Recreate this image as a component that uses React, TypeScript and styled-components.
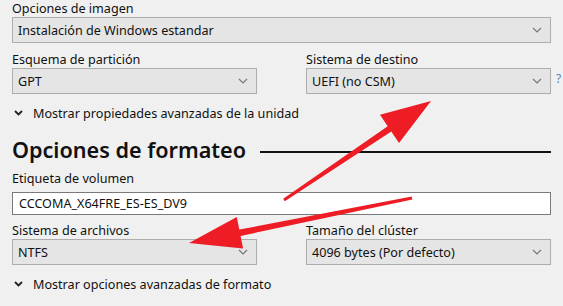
import React from 'react';
import styled, { createGlobalStyle } from 'styled-components';

const GlobalStyle = createGlobalStyle`
  html, body {
    margin: 0;
    padding: 0;
    background: #f0f0f0;
  }
  body {
    font-family: "Noto Sans", "Open Sans", sans-serif;
    color: #111;
  }
`;

const Page = styled.div`
  position: relative;
  width: 563px;
  height: 306px;
  overflow: hidden;
  box-sizing: border-box;
  padding: 0 12px;
  background: #f0f0f0;
`;

const Label = styled.div<{ $gap?: number }>`
  font-size: 12.6px;
  line-height: 17px;
  height: 17px;
  margin-top: ${p => p.$gap ?? 0}px;
  white-space: nowrap;
`;

const Select = styled.div`
  box-sizing: border-box;
  height: 26px;
  display: flex;
  align-items: center;
  justify-content: space-between;
  padding: 0 8px 0 5px;
  background: #e5e5e5;
  border: 1px solid #adadad;
  font-size: 12.6px;
  white-space: nowrap;
`;

const Row = styled.div`
  display: grid;
  grid-template-columns: 245px 245px;
  column-gap: 49px;
`;

const Field = styled.div`
  position: relative;
`;

const Help = styled.span`
  position: absolute;
  left: calc(100% + 5px);
  font-size: 12px;
  line-height: 14px;
  color: #5b86b3;
`;

const Toggle = styled.div<{ $h: number }>`
  display: flex;
  align-items: center;
  gap: 10px;
  height: ${p => p.$h}px;
  padding-left: 2px;
  font-size: 12.6px;
  white-space: nowrap;
`;

const Heading = styled.div`
  display: flex;
  align-items: center;
  gap: 14px;
  height: 36px;
`;

const HeadingText = styled.h2`
  margin: 0;
  font-size: 21.6px;
  font-weight: 600;
  line-height: 26px;
  white-space: nowrap;
`;

const Rule = styled.div`
  flex: 1;
  height: 2px;
  background: #111;
  margin-top: 3px;
`;

const Input = styled.div`
  box-sizing: border-box;
  height: 23px;
  margin-top: 5px;
  display: flex;
  align-items: center;
  padding: 0 6px;
  background: #fff;
  border: 1px solid #7a7a7a;
  font-size: 12.6px;
`;

const Overlay = styled.svg`
  position: absolute;
  left: 0;
  top: 0;
  pointer-events: none;
`;

const Chevron = () => (
  <svg width="10" height="6" viewBox="0 0 10 6">
    <path d="M1 1 L5 5 L9 1" fill="none" stroke="#777" strokeWidth="1.2" />
  </svg>
);

const SmallChevron = () => (
  <svg width="9" height="6" viewBox="0 0 9 6">
    <path d="M1 1 L4.5 4.5 L8 1" fill="none" stroke="#222" strokeWidth="1.8" />
  </svg>
);

function arrowPoints(tx: number, ty: number, px: number, py: number, headLen: number, headHalf: number, tailHalf: number, neckHalf: number) {
  const dx = px - tx;
  const dy = py - ty;
  const len = Math.hypot(dx, dy);
  const ux = dx / len;
  const uy = dy / len;
  const nx = -uy;
  const ny = ux;
  const bx = px - ux * headLen;
  const by = py - uy * headLen;
  const pts = [
    [tx + nx * tailHalf, ty + ny * tailHalf],
    [bx + nx * neckHalf, by + ny * neckHalf],
    [bx + nx * headHalf, by + ny * headHalf],
    [px, py],
    [bx - nx * headHalf, by - ny * headHalf],
    [bx - nx * neckHalf, by - ny * neckHalf],
    [tx - nx * tailHalf, ty - ny * tailHalf],
  ];
  return pts.map(p => p.map(v => v.toFixed(1)).join(',')).join(' ');
}

const SelectField = ({ label, value, gap, help }: { label: string; value: string; gap?: number; help?: boolean }) => (
  <Field>
    <Label $gap={gap}>{label}</Label>
    <Select>
      <span>{value}</span>
      <Chevron />
    </Select>
    {help && <Help style={{ top: (gap ?? 0) + 21 }}>?</Help>}
  </Field>
);

export default function App() {
  return (
    <>
      <GlobalStyle />
      <Page>
        <Label>Opciones de imagen</Label>
        <Select>
          <span>Instalación de Windows estandar</span>
          <Chevron />
        </Select>
        <Row>
          <SelectField label="Esquema de partición" value="GPT" gap={8} />
          <SelectField label="Sistema de destino" value="UEFI (no CSM)" gap={8} help />
        </Row>
        <Toggle $h={38}>
          <SmallChevron />
          <span>Mostrar propiedades avanzadas de la unidad</span>
        </Toggle>
        <Heading>
          <HeadingText>Opciones de formateo</HeadingText>
          <Rule />
        </Heading>
        <Label $gap={2}>Etiqueta de volumen</Label>
        <Input>CCCOMA_X64FRE_ES-ES_DV9</Input>
        <Row>
          <SelectField label="Sistema de archivos" value="NTFS" gap={7} />
          <SelectField label="Tamaño del clúster" value="4096 bytes (Por defecto)" gap={7} />
        </Row>
        <Toggle $h={38}>
          <SmallChevron />
          <span>Mostrar opciones avanzadas de formato</span>
        </Toggle>
        <Overlay width="563" height="306" viewBox="0 0 563 306">
          <polygon points={arrowPoints(284, 200, 431, 101, 50, 17, 1.5, 3.2)} fill="#ee1c25" />
          <polygon points={arrowPoints(412, 198, 189, 243, 52, 16, 1.5, 3.2)} fill="#ee1c25" />
        </Overlay>
      </Page>
    </>
  );
}
